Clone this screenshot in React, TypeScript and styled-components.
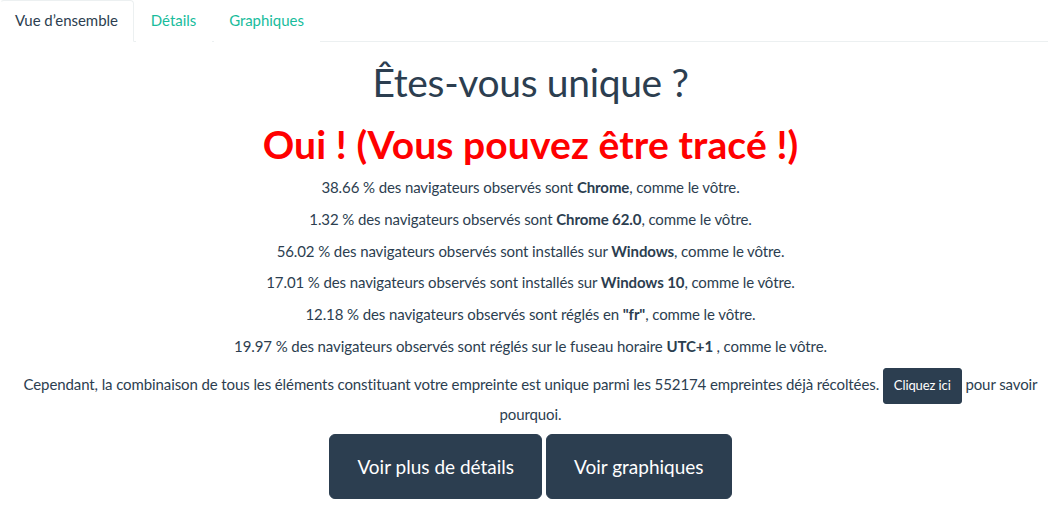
import React from 'react';
import styled, { createGlobalStyle } from 'styled-components';

const GlobalStyle = createGlobalStyle`
  html, body {
    margin: 0;
    padding: 0;
    background: #ffffff;
  }
  body {
    font-family: Lato, "Open Sans", "Liberation Sans", sans-serif;
    font-size: 15px;
    line-height: 1.42857143;
    color: #2c3e50;
  }
  * {
    box-sizing: border-box;
  }
`;

const Tabs = styled.ul`
  display: flex;
  list-style: none;
  margin: 0;
  padding: 0;
  border-bottom: 1px solid #ecf0f1;
  letter-spacing: -0.05px;
`;

const Tab = styled.li<{ $active?: boolean }>`
  margin-right: 2px;
  margin-bottom: -1px;

  a {
    display: block;
    padding: 9px 15px 10px 14px;
    line-height: 1.42857143;
    border: 1px solid ${props => (props.$active ? '#ecf0f1' : 'transparent')};
    border-left-color: transparent;
    border-bottom-color: ${props => (props.$active ? '#ffffff' : 'transparent')};
    border-radius: 4px 4px 0 0;
    background: #ffffff;
    color: ${props => (props.$active ? '#2c3e50' : '#18bc9c')};
    text-decoration: none;
    cursor: pointer;
  }
`;

const Content = styled.div`
  padding: 0 2px 0 15px;
  text-align: center;
`;

const Title = styled.h1<{ $alert?: boolean }>`
  font-size: 39px;
  line-height: 1.1;
  margin: 19px 0 10.5px;
  font-weight: ${props => (props.$alert ? 700 : 400)};
  letter-spacing: ${props => (props.$alert ? '0.1px' : '-0.35px')};
  color: ${props => (props.$alert ? '#ff0000' : '#2c3e50')};
`;

const Stat = styled.p`
  margin: 0 0 10.5px;
  letter-spacing: -0.1px;
`;

const Summary = styled.p`
  margin: 0 0 8.5px;
  letter-spacing: -0.1px;
`;

const SmallButton = styled.button`
  display: inline-block;
  font-family: inherit;
  font-size: 13px;
  line-height: 1.5;
  letter-spacing: -0.1px;
  padding: 7px 10px;
  border: 1px solid #2c3e50;
  border-radius: 3px;
  background: #2c3e50;
  color: #ffffff;
  vertical-align: middle;
  cursor: pointer;
`;

const Actions = styled.div`
  display: flex;
  justify-content: center;
  gap: 4px;
`;

const BigButton = styled.button`
  font-family: inherit;
  font-size: 19px;
  line-height: 1.3333333;
  padding: 19px 27px;
  border: 1px solid #2c3e50;
  border-radius: 6px;
  background: #2c3e50;
  color: #ffffff;
  cursor: pointer;
`;

const stats = [
  { pct: '38.66', verb: 'sont', what: 'Chrome' },
  { pct: '1.32', verb: 'sont', what: 'Chrome 62.0' },
  { pct: '56.02', verb: 'sont installés sur', what: 'Windows' },
  { pct: '17.01', verb: 'sont installés sur', what: 'Windows 10' },
  { pct: '12.18', verb: 'sont réglés en', what: '"fr"' },
  { pct: '19.97', verb: 'sont réglés sur le fuseau horaire', what: 'UTC+1 ' },
];

export default function App() {
  return (
    <>
      <GlobalStyle />
      <Tabs>
        <Tab $active><a>Vue d’ensemble</a></Tab>
        <Tab><a>Détails</a></Tab>
        <Tab><a>Graphiques</a></Tab>
      </Tabs>
      <Content>
        <Title>Êtes-vous unique ?</Title>
        <Title $alert>Oui ! (Vous pouvez être tracé !)</Title>
        {stats.map(s => (
          <Stat key={s.pct}>
            {s.pct} % des navigateurs observés {s.verb} <strong>{s.what}</strong>, comme le vôtre.
          </Stat>
        ))}
        <Summary>
          Cependant, la combinaison de tous les éléments constituant votre empreinte est unique parmi les 552174 empreintes déjà récoltées.{' '}
          <SmallButton>Cliquez ici</SmallButton> pour savoir pourquoi.
        </Summary>
        <Actions>
          <BigButton>Voir plus de détails</BigButton>
          <BigButton>Voir graphiques</BigButton>
        </Actions>
      </Content>
    </>
  );
}
